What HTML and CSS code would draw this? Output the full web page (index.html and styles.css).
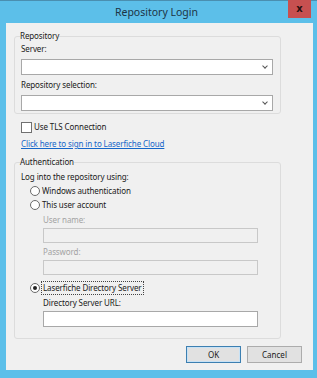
FILE: index.html
```html
<!DOCTYPE html>
<html lang="en">
<head>
  <meta charset="UTF-8">
  <title>Repository Login</title>
  <link rel="stylesheet" href="styles.css">
</head>
<body>
  <div class="janela">
    <div class="barra-titulo">
      <span class="titulo">Repository Login</span>
      <button class="fechar" aria-label="Close">x</button>
    </div>

    <div class="conteudo">
      <fieldset class="grupo grupo-repo">
        <legend>Repository</legend>
        <label class="rotulo primeiro">Server:</label>
        <div class="combo"><span class="seta"></span></div>
        <label class="rotulo">Repository selection:</label>
        <div class="combo"><span class="seta"></span></div>
      </fieldset>

      <label class="check-linha"><span class="caixa"></span>Use TLS Connection</label>
      <a class="link-nuvem" href="#">Click here to sign in to Laserfiche Cloud</a>

      <fieldset class="grupo grupo-auth">
        <legend>Authentication</legend>
        <div class="rotulo primeiro">Log into the repository using:</div>
        <label class="radio-linha"><span class="radio"></span>Windows authentication</label>
        <label class="radio-linha"><span class="radio"></span>This user account</label>
        <div class="recuo">
          <div class="rotulo desativado">User name:</div>
          <div class="campo campo-off"></div>
          <div class="rotulo desativado">Password:</div>
          <div class="campo campo-off"></div>
        </div>
        <label class="radio-linha ativo"><span class="radio marcado"></span><span class="foco">Laserfiche Directory Server</span></label>
        <div class="recuo">
          <div class="rotulo">Directory Server URL:</div>
          <div class="campo campo-url"></div>
        </div>
      </fieldset>

      <div class="botoes">
        <button class="botao botao-padrao">OK</button>
        <button class="botao">Cancel</button>
      </div>
    </div>
  </div>
</body>
</html>
```

FILE: styles.css
```css
:root {
  --azul-moldura: #5cbfe9;
  --fundo: #f0f0f0;
  --texto: #1a1a1a;
  --texto-off: #a3a3a3;
  --borda-grupo: #dcdcdc;
  --borda-campo: #a8a8a8;
}

html, body {
  margin: 0;
  height: 100%;
}

body {
  font-family: "Noto Sans", "Open Sans", sans-serif;
  font-size: 8px;
  letter-spacing: -0.1px;
  color: var(--texto);
  background: var(--azul-moldura);
}

.janela {
  height: 378px;
  box-sizing: border-box;
  border-top: 1px solid #4a8fb0;
  padding: 0 4px 8px 6px;
  display: flex;
  flex-direction: column;
}

/* Title bar */
.barra-titulo {
  height: 22px;
  display: flex;
  align-items: center;
  justify-content: center;
  position: relative;
}

.titulo {
  font-size: 10.5px;
  color: #1d3445;
  letter-spacing: 0;
  margin-right: 6px;
}

.fechar {
  position: absolute;
  top: -1px;
  right: 2px;
  width: 23px;
  height: 18px;
  border: none;
  padding: 0 0 2px;
  background: #c75050;
  color: #2a1010;
  font: bold 10px "DejaVu Sans", sans-serif;
}

/* Client area */
.conteudo {
  flex: 1;
  background: var(--fundo);
  padding: 7px 11px 4px 8px;
  display: flex;
  flex-direction: column;
}

.grupo {
  margin: 0;
  min-width: 0;
  width: 267px;
  box-sizing: border-box;
  border: 1px solid var(--borda-grupo);
  border-radius: 3px;
  padding: 0 7px 2px 6px;
  display: flex;
  flex-direction: column;
}

.grupo legend {
  padding: 0;
  margin-left: -1px;
  line-height: 12px;
}

.rotulo {
  display: block;
  line-height: 12px;
  margin: 4px 0 4px;
}

.rotulo.primeiro {
  margin-top: 1px;
}

.desativado {
  color: var(--texto-off);
}

.combo {
  height: 14px;
  border: 1px solid var(--borda-campo);
  background: #fff;
  display: flex;
  justify-content: flex-end;
  align-items: center;
  padding-right: 5px;
}

.seta {
  width: 3px;
  height: 3px;
  border-right: 1.2px solid #555;
  border-bottom: 1.2px solid #555;
  transform: rotate(45deg);
  margin-top: -2px;
}

.check-linha {
  display: flex;
  align-items: center;
  gap: 2px;
  margin: 7px 0 0 7px;
  line-height: 12px;
}

.caixa {
  width: 9px;
  height: 9px;
  border: 1px solid #707070;
  background: #fff;
}

.link-nuvem {
  color: #1566c9;
  margin: 5px 0 0 7px;
  line-height: 12px;
}

.grupo-auth {
  margin-top: 6px;
  padding-bottom: 11px;
}

.grupo-auth .rotulo.primeiro {
  margin-top: 3px;
  margin-bottom: 2px;
}

.radio-linha {
  display: flex;
  align-items: center;
  gap: 2px;
  margin: 0 0 2px 9px;
  line-height: 12px;
}

.radio {
  width: 8px;
  height: 8px;
  border: 1px solid #6a6a6a;
  border-radius: 50%;
  background: #fff;
  display: flex;
  align-items: center;
  justify-content: center;
}

.radio.marcado::after {
  content: "";
  width: 4px;
  height: 4px;
  border-radius: 50%;
  background: #222;
}

.foco {
  outline: 1px dotted #444;
  padding: 0 1px;
}

.ativo {
  margin-top: 5px;
}

.recuo {
  margin-left: 22px;
  width: 215px;
  display: flex;
  flex-direction: column;
}

.recuo .rotulo {
  margin: 1px 0 2px;
}

.campo {
  height: 13px;
  border: 1px solid var(--borda-campo);
  background: #fff;
}

.campo-off {
  background: var(--fundo);
  border-color: #c8c8c8;
  margin-bottom: 2px;
}

.campo-url {
  height: 14px;
}

/* Buttons */
.botoes {
  display: flex;
  justify-content: flex-end;
  gap: 6px;
  margin-top: 7px;
}

.botao {
  width: 55px;
  height: 17px;
  border: 1px solid #acacac;
  background: #e1e1e1;
  font-family: inherit;
  font-size: 8px;
  color: var(--texto);
  padding: 0;
}

.botao-padrao {
  border-color: #3c7fb1;
  box-shadow: inset 0 0 0 1px #c8e2f5;
}
```
